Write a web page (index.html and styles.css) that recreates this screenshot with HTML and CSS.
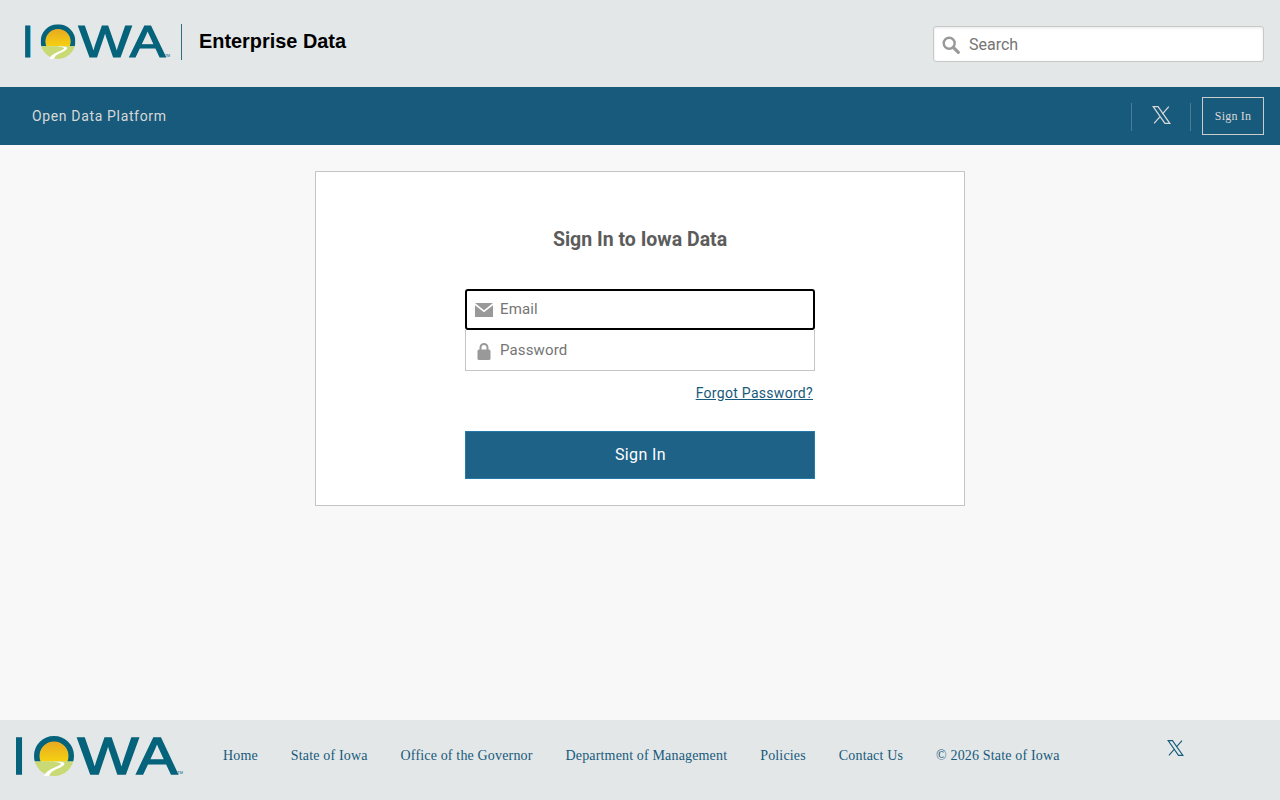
FILE: index.html
```html
<!DOCTYPE html>
<html lang="en">
<head>
<meta charset="utf-8">
<title>Sign In to Iowa Data</title>
<link rel="stylesheet" href="styles.css">
</head>
<body>
<svg class="defs" width="0" height="0" aria-hidden="true">
  <defs>
    <linearGradient id="sun" x1="0" y1="1" x2="0" y2="0">
      <stop offset="0" stop-color="#fbe30a"/>
      <stop offset="1" stop-color="#e8a920"/>
    </linearGradient>
    <clipPath id="upper"><rect x="18" y="0" width="40" height="25.5"/></clipPath>
    <clipPath id="lower"><rect x="18" y="25.5" width="40" height="16"/></clipPath>
    <symbol id="iowa" viewBox="0 0 168 41">
      <text class="logo-letter" x="-4" y="38" font-size="51" textLength="14" lengthAdjust="spacingAndGlyphs">I</text>
      <circle cx="38" cy="20" r="17" fill="none" stroke="#05637b" stroke-width="6" clip-path="url(#upper)"/>
      <circle cx="38" cy="20" r="14.5" fill="url(#sun)" clip-path="url(#upper)"/>
      <circle cx="38" cy="20" r="20" fill="#c9d974" clip-path="url(#lower)"/>
      <path d="M37 25.500c4 .7 7 1 8 2.200 .4 1.300-9 4.800-11.500 6.300-3 2-5 4-5.500 6h5c1-2 2-4 5-5.500 3-1.700 10.500-4 10.500-7 0-1-3-2-6.500-2z" fill="#fff" clip-path="url(#lower)"/>
      <text class="logo-letter" x="61.500" y="38" font-size="51" textLength="61" lengthAdjust="spacingAndGlyphs">W</text>
      <text class="logo-letter" x="120.500" y="38" font-size="51" textLength="41" lengthAdjust="spacingAndGlyphs">A</text>
      <text class="logo-tm" x="161" y="38" font-size="4" textLength="6" lengthAdjust="spacingAndGlyphs">TM</text>
    </symbol>
    <symbol id="x-mark" viewBox="0 0 19 18">
      <path d="M1.200 .7h4.900l11.700 16.600h-4.900zM16.800 .7l-6.500 7.400M8.500 10.100l-6.400 7.200" fill="none" stroke="currentColor" stroke-width="1.250"/>
    </symbol>
  </defs>
</svg>

<header class="masthead">
  <a class="brand" href="#">
    <svg class="logo-top" role="img" aria-label="Iowa"><use href="#iowa"/></svg>
    <span class="brand-rule"></span>
    <span class="brand-name">Enterprise Data</span>
  </a>
  <label class="search">
    <svg class="search-icon" viewBox="0 0 18 18" aria-hidden="true">
      <circle cx="7.200" cy="7.200" r="5.500" fill="none" stroke="#999" stroke-width="2.400"/>
      <path d="M11.300 11.300l5 5" stroke="#999" stroke-width="3.200" stroke-linecap="round"/>
    </svg>
    <input class="search-input" type="text" placeholder="Search">
  </label>
</header>

<nav class="navbar">
  <a class="nav-title" href="#">Open Data Platform</a>
  <div class="nav-actions">
    <span class="nav-divider"></span>
    <a class="nav-x" href="#" aria-label="X"><svg class="nav-x-icon"><use href="#x-mark"/></svg></a>
    <span class="nav-divider"></span>
    <a class="nav-signin" href="#">Sign In</a>
  </div>
</nav>

<main class="content">
  <form class="card">
    <h1 class="card-title">Sign In to Iowa Data</h1>
    <div class="field field-focus">
      <svg class="field-icon field-icon-mail" viewBox="0 0 18 14" aria-hidden="true">
        <path d="M0 0h18L9 7.200z" fill="#999"/>
        <path d="M0 2.200l9 7 9-7V14H0z" fill="#999"/>
      </svg>
      <input class="field-input field-input-up" type="text" placeholder="Email">
    </div>
    <div class="field">
      <svg class="field-icon" viewBox="0 0 18 18" aria-hidden="true">
        <path d="M5.500 8V5.500a3.500 3.500 0 0 1 7 0V8" fill="none" stroke="#999" stroke-width="2"/>
        <rect x="2.500" y="7.500" width="13" height="10.500" rx="1.500" fill="#999"/>
      </svg>
      <input class="field-input" type="password" placeholder="Password">
    </div>
    <div class="forgot-row"><a class="forgot" href="#">Forgot Password?</a></div>
    <button class="submit" type="button">Sign In</button>
  </form>
</main>

<footer class="footer">
  <svg class="logo-foot" role="img" aria-label="Iowa"><use href="#iowa"/></svg>
  <ul class="foot-links">
    <li><a href="#">Home</a></li>
    <li><a href="#">State of Iowa</a></li>
    <li><a href="#">Office of the Governor</a></li>
    <li><a href="#">Department of Management</a></li>
    <li><a href="#">Policies</a></li>
    <li><a href="#">Contact Us</a></li>
    <li>© 2026 State of Iowa</li>
  </ul>
  <a class="foot-x" href="#" aria-label="X"><svg class="foot-x-icon"><use href="#x-mark"/></svg></a>
</footer>
</body>
</html>
```
FILE: styles.css
```css
* { box-sizing: border-box; }
html, body { margin: 0; height: 100%; }
body {
  display: flex;
  flex-direction: column;
  min-height: 800px;
  background: #f8f8f8;
  font-family: Roboto, "Liberation Sans", sans-serif;
}
a { text-decoration: none; color: inherit; }
.defs { position: absolute; }
.logo-letter {
  font-family: "Liberation Sans", sans-serif;
  font-weight: 400;
  fill: #05637b;
  stroke: #05637b;
  stroke-width: 1.400px;
}
.logo-tm { font-family: "Liberation Sans", sans-serif; fill: #05637b; }

.masthead {
  height: 87px;
  flex: none;
  background: #e3e7e8;
  display: flex;
  align-items: flex-start;
  justify-content: space-between;
  padding: 24px 16px 0 25px;
}
.brand { display: flex; align-items: center; height: 36px; }
.logo-top { width: 146px; height: 36px; }
.brand-rule { width: 1px; height: 36px; background: #2f6c7e; margin: 0 17px 0 10px; }
.brand-name {
  font-family: "Liberation Sans", sans-serif;
  font-weight: 700;
  font-size: 19.900px;
  color: #000;
  position: relative;
  top: -1px;
}
.search {
  width: 331px;
  height: 36px;
  margin-top: 2px;
  display: flex;
  align-items: center;
  background: #fff;
  border: 1px solid #c8c8c8;
  border-radius: 3px;
  box-shadow: inset 0 1px 3px rgba(0,0,0,.1);
  padding-left: 8px;
}
.search-icon { width: 18px; height: 18px; flex: none; margin-top: 2px; }
.search-input {
  flex: 1;
  min-width: 0;
  border: 0;
  outline: 0;
  background: transparent;
  padding: 0 0 0 9px;
  font: 400 16px Roboto, sans-serif;
}
.search-input::placeholder, .field-input::placeholder { color: #757575; opacity: 1; }

.navbar {
  height: 58px;
  flex: none;
  background: #175a7b;
  display: flex;
  align-items: center;
  justify-content: space-between;
  padding: 0 16px 0 32px;
}
.nav-title { color: #d8d8d8; font-size: 14px; letter-spacing: .65px; }
.nav-actions { display: flex; align-items: center; }
.nav-divider { width: 1px; height: 28px; margin-top: 2px; background: rgba(255,255,255,.22); }
.nav-x {
  width: 58px;
  height: 28px;
  display: flex;
  align-items: center;
  justify-content: center;
  color: #d8d8d8;
}
.nav-x-icon { width: 19px; height: 18px; margin-top: -2px; }
.nav-signin {
  width: 62px;
  height: 38px;
  margin-left: 11px;
  display: flex;
  align-items: center;
  justify-content: center;
  border: 1px solid #ccc;
  color: #d8d8d8;
  font-family: "Liberation Serif", serif;
  font-size: 12px;
  letter-spacing: .2px;
}

.content {
  flex: 1;
  display: flex;
  justify-content: center;
  align-items: flex-start;
  padding-top: 26px;
}
.card {
  width: 650px;
  height: 335px;
  background: #fff;
  border: 1px solid #c5c5c5;
  padding: 55px 149px 0;
}
.card-title {
  margin: 0 0 37px;
  height: 25px;
  line-height: 25px;
  text-align: center;
  font-size: 19.500px;
  font-weight: 700;
  color: #5c5c5c;
}
.field {
  height: 41px;
  display: flex;
  align-items: center;
  border: 1px solid #c5c5c5;
  border-top: 0;
  padding-left: 9px;
  background: #fff;
}
.field-focus {
  border: 2px solid #000;
  border-radius: 3px;
  padding-left: 8px;
}
.field-icon { width: 18px; height: 18px; flex: none; margin-top: 2px; }
.field-icon-mail { margin-top: 0; }
.field-input {
  flex: 1;
  min-width: 0;
  border: 0;
  outline: 0;
  background: transparent;
  padding: 0 0 0 7px;
  font: 400 15px Roboto, sans-serif;
  letter-spacing: .15px;
}
.field-input-up { padding-bottom: 2px; }
.forgot-row { text-align: right; padding: 12px 2px 0 0; height: 60px; }
.forgot {
  color: #175a7b;
  font-size: 14px;
  letter-spacing: .3px;
  text-decoration: underline;
}
.submit {
  display: block;
  width: 100%;
  height: 48px;
  padding: 0 0 2px 1px;
  background: #1e6288;
  border: 1px solid #2379a8;
  color: #fff;
  font: 400 16px Roboto, sans-serif;
  letter-spacing: .4px;
}

.footer {
  height: 80px;
  flex: none;
  background: #e3e7e8;
  display: flex;
  align-items: flex-start;
  padding: 16px 0 0 16px;
  color: #175a7b;
  font-family: "Liberation Serif", serif;
  font-size: 14px;
}
.logo-foot { width: 168px; height: 41px; flex: none; }
.foot-links {
  list-style: none;
  margin: 0 0 0 39px;
  padding: 12px 0 0;
  display: flex;
  gap: 33px;
  letter-spacing: .16px;
}
.foot-x { margin-left: 107px; margin-top: 4px; display: flex; }
.foot-x-icon { width: 17px; height: 16px; }
```
